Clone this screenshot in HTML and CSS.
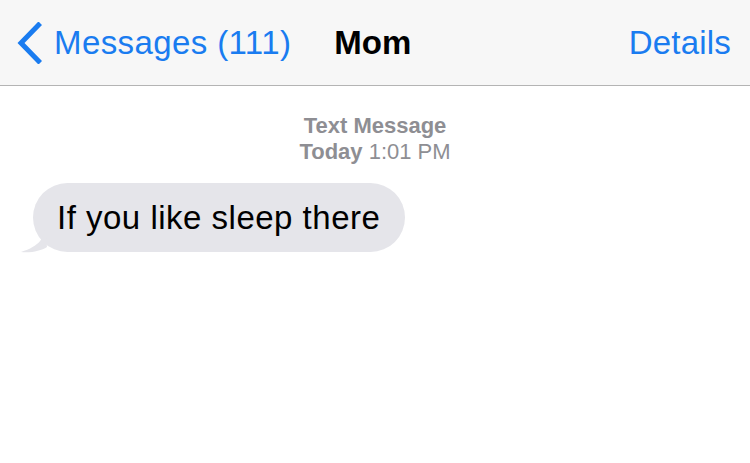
FILE: index.html
```html
<!DOCTYPE html>
<html>
<head>
<meta charset="utf-8">
<link rel="stylesheet" href="styles.css">
</head>
<body>
<div class="screen">
  <header class="navbar">
    <div class="back">
      <svg class="chev" width="26" height="42" viewBox="0 0 26 42"><path d="M22.5 3 L5 21 L22.5 39" fill="none" stroke="#1a7cf0" stroke-width="5" stroke-linecap="square" stroke-linejoin="miter"/></svg>
      <span class="back-label">Messages (111)</span>
    </div>
    <div class="title">Mom</div>
    <div class="details">Details</div>
  </header>
  <main class="thread">
    <div class="stamp">
      <div class="stamp-line"><b>Text Message</b></div>
      <div class="stamp-line"><b>Today</b> 1:01 PM</div>
    </div>
    <div class="row">
      <div class="bubble">
        <svg class="tail" width="26" height="26" viewBox="0 0 26 26"><path d="M24 0 C23 11 19 19 0 25 C10 26 20 24 26 20 Z" fill="#e5e5ea"/></svg>
        <span class="bubble-text">If you like sleep there</span>
      </div>
    </div>
  </main>
</div>
</body>
</html>
```
FILE: styles.css
```css
html, body {
  margin: 0;
  padding: 0;
  background: #ffffff;
}
.screen {
  width: 750px;
  height: 463px;
  overflow: hidden;
  font-family: "Liberation Sans", Arial, sans-serif;
}
.navbar {
  height: 86px;
  box-sizing: border-box;
  background: #f7f7f7;
  border-bottom: 1px solid #b4b4b4;
  display: flex;
  align-items: center;
  padding: 0 19px 0 16px;
}
.back {
  display: flex;
  align-items: center;
  gap: 12px;
  color: #1a7cf0;
}
.chev {
  display: block;
}
.back-label {
  font-size: 33px;
  letter-spacing: 0.4px;
}
.title {
  font-size: 33px;
  font-weight: bold;
  color: #000;
  margin-left: 43px;
}
.details {
  margin-left: auto;
  font-size: 33px;
  color: #1a7cf0;
  letter-spacing: 0.2px;
}
.thread {
  padding-top: 27px;
}
.stamp {
  text-align: center;
  color: #8e8e93;
  font-size: 22px;
  line-height: 26px;
}
.stamp b {
  font-weight: bold;
}
.row {
  display: flex;
  padding-left: 33px;
  margin-top: 18px;
}
.bubble {
  position: relative;
  background: #e5e5ea;
  border-radius: 35px;
  height: 69px;
  display: flex;
  align-items: center;
  padding: 0 25px 0 24px;
}
.tail {
  position: absolute;
  left: -12px;
  bottom: -1px;
}
.bubble-text {
  font-size: 33px;
  color: #000;
  letter-spacing: 0.5px;
}
```
